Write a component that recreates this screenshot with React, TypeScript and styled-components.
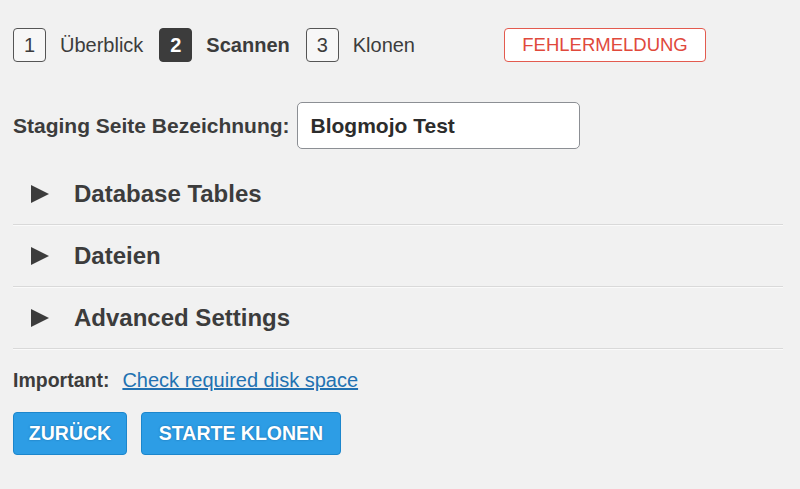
import styled, { createGlobalStyle } from "styled-components";

const GlobalStyle = createGlobalStyle`
  html, body {
    margin: 0;
    padding: 0;
    background: #f1f1f1;
  }
  body {
    font-family: "Liberation Sans", Arial, sans-serif;
    color: #3c3c3c;
  }
`;

const Page = styled.div`
  padding: 28px 17px 0 13px;
  width: 770px;
`;

const Steps = styled.div`
  display: flex;
  align-items: center;
  height: 34px;
`;

const StepBox = styled.span<{ $active?: boolean }>`
  box-sizing: border-box;
  width: 33px;
  height: 34px;
  display: flex;
  align-items: center;
  justify-content: center;
  border-radius: 4px;
  border: 1px solid ${(p) => (p.$active ? "#3c3c3c" : "#555")};
  background: ${(p) => (p.$active ? "#3c3c3c" : "#f7f7f7")};
  color: ${(p) => (p.$active ? "#fff" : "#3c3c3c")};
  font-size: 20px;
  font-weight: ${(p) => (p.$active ? 700 : 400)};
`;

const StepLabel = styled.span<{ $active?: boolean }>`
  margin: 0 16px 0 14px;
  font-size: 20px;
  font-weight: ${(p) => (p.$active ? 700 : 400)};
  color: #3c3c3c;
`;

const ErrorBadge = styled.span`
  box-sizing: border-box;
  margin-left: auto;
  margin-right: 77px;
  height: 34px;
  width: 202px;
  display: flex;
  align-items: center;
  justify-content: center;
  background: #fff;
  border: 1.5px solid #e35b4f;
  border-radius: 4px;
  color: #e0493c;
  font-size: 18.5px;
`;

const NameRow = styled.div`
  display: flex;
  align-items: center;
  margin-top: 40px;
  gap: 7px;
`;

const Label = styled.label`
  font-size: 21px;
  font-weight: 700;
  color: #3c3c3c;
`;

const TextInput = styled.input`
  box-sizing: border-box;
  width: 283px;
  height: 47px;
  padding: 0 13px;
  border: 1.5px solid #8c8f94;
  border-radius: 5px;
  background: #fff;
  font-family: "Liberation Sans", Arial, sans-serif;
  font-size: 21px;
  font-weight: 700;
  color: #2c2c2c;
  outline: none;
`;

const Sections = styled.div`
  margin-top: 14px;
`;

const Section = styled.div`
  display: flex;
  align-items: center;
  height: 61px;
  border-bottom: 1px solid #d9d9d9;
  box-shadow: 0 1px 0 #fafafa;
`;

const Arrow = styled.svg`
  width: 18px;
  height: 18px;
  margin-left: 18px;
  margin-right: 25px;
  flex: none;
`;

const SectionTitle = styled.span`
  font-size: 24px;
  font-weight: 700;
  color: #3c3c3c;
`;

const Notice = styled.div`
  margin-top: 20px;
  font-size: 19.5px;
  line-height: 22px;
  color: #3c3c3c;
`;

const Strong = styled.span`
  font-weight: 700;
  margin-right: 13px;
`;

const Link = styled.a`
  color: #2271b1;
  text-decoration: underline;
  font-size: 20px;
`;

const Buttons = styled.div`
  display: flex;
  gap: 14px;
  margin-top: 21px;
`;

const Button = styled.button<{ $width: number }>`
  box-sizing: border-box;
  width: ${(p) => p.$width}px;
  height: 43px;
  background: #2d9de5;
  border: 1px solid #1c86cc;
  border-radius: 4px;
  color: #fff;
  font-family: "Liberation Sans", Arial, sans-serif;
  font-size: 19.5px;
  font-weight: 700;
  text-shadow: 0 0 2px rgba(0, 60, 110, 0.5);
  cursor: pointer;
`;

const sections = ["Database Tables", "Dateien", "Advanced Settings"];

export default function App() {
  return (
    <>
      <GlobalStyle />
      <Page>
        <Steps>
          <StepBox>1</StepBox>
          <StepLabel>Überblick</StepLabel>
          <StepBox $active>2</StepBox>
          <StepLabel $active>Scannen</StepLabel>
          <StepBox>3</StepBox>
          <StepLabel>Klonen</StepLabel>
          <ErrorBadge>FEHLERMELDUNG</ErrorBadge>
        </Steps>

        <NameRow>
          <Label htmlFor="clone-name">Staging Seite Bezeichnung:</Label>
          <TextInput id="clone-name" defaultValue="Blogmojo Test" />
        </NameRow>

        <Sections>
          {sections.map((title) => (
            <Section key={title}>
              <Arrow viewBox="0 0 18 18">
                <path d="M0 0 L18 9 L0 18 Z" fill="#3c3c3c" />
              </Arrow>
              <SectionTitle>{title}</SectionTitle>
            </Section>
          ))}
        </Sections>

        <Notice>
          <Strong>Important:</Strong>
          <Link href="#">Check required disk space</Link>
        </Notice>

        <Buttons>
          <Button $width={114}>ZURÜCK</Button>
          <Button $width={200}>STARTE KLONEN</Button>
        </Buttons>
      </Page>
    </>
  );
}
